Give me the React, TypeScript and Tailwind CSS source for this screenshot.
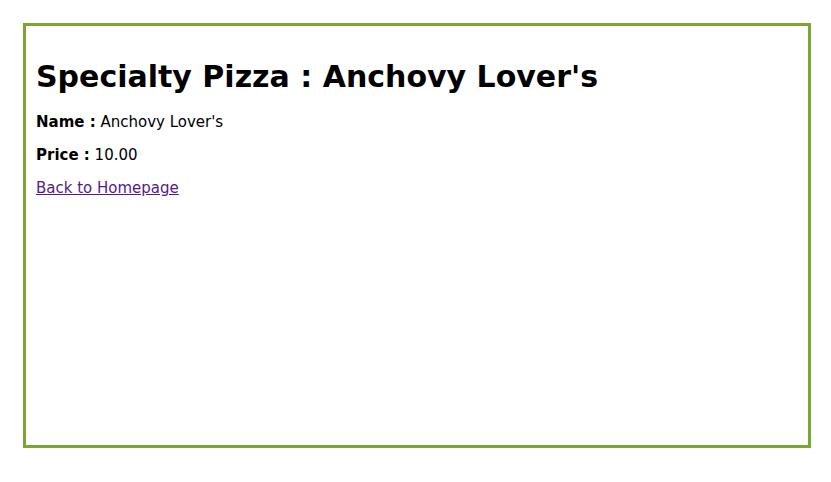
export default function App() {
  return (
    <div className="bg-white pb-[34px] pl-[23px] pr-[20px] pt-[23px] font-['DejaVu_Sans','Verdana',sans-serif] text-black">
      <div className="h-[425px] border-[3px] border-[#78a831] px-[10px]">
        <h1 className="mb-[18px] mt-[33px] text-[30px] font-bold leading-[36px]">
          Specialty Pizza : Anchovy Lover's
        </h1>
        <p className="my-[15px] text-[15px] leading-[18px]">
          <b>Name :</b> Anchovy Lover's
        </p>
        <p className="my-[15px] text-[15px] leading-[18px]">
          <b>Price :</b> 10.00
        </p>
        <p className="my-[15px] text-[15px] leading-[18px]">
          <a href="#" className="text-[#551a8b] underline">
            Back to Homepage
          </a>
        </p>
      </div>
    </div>
  );
}
